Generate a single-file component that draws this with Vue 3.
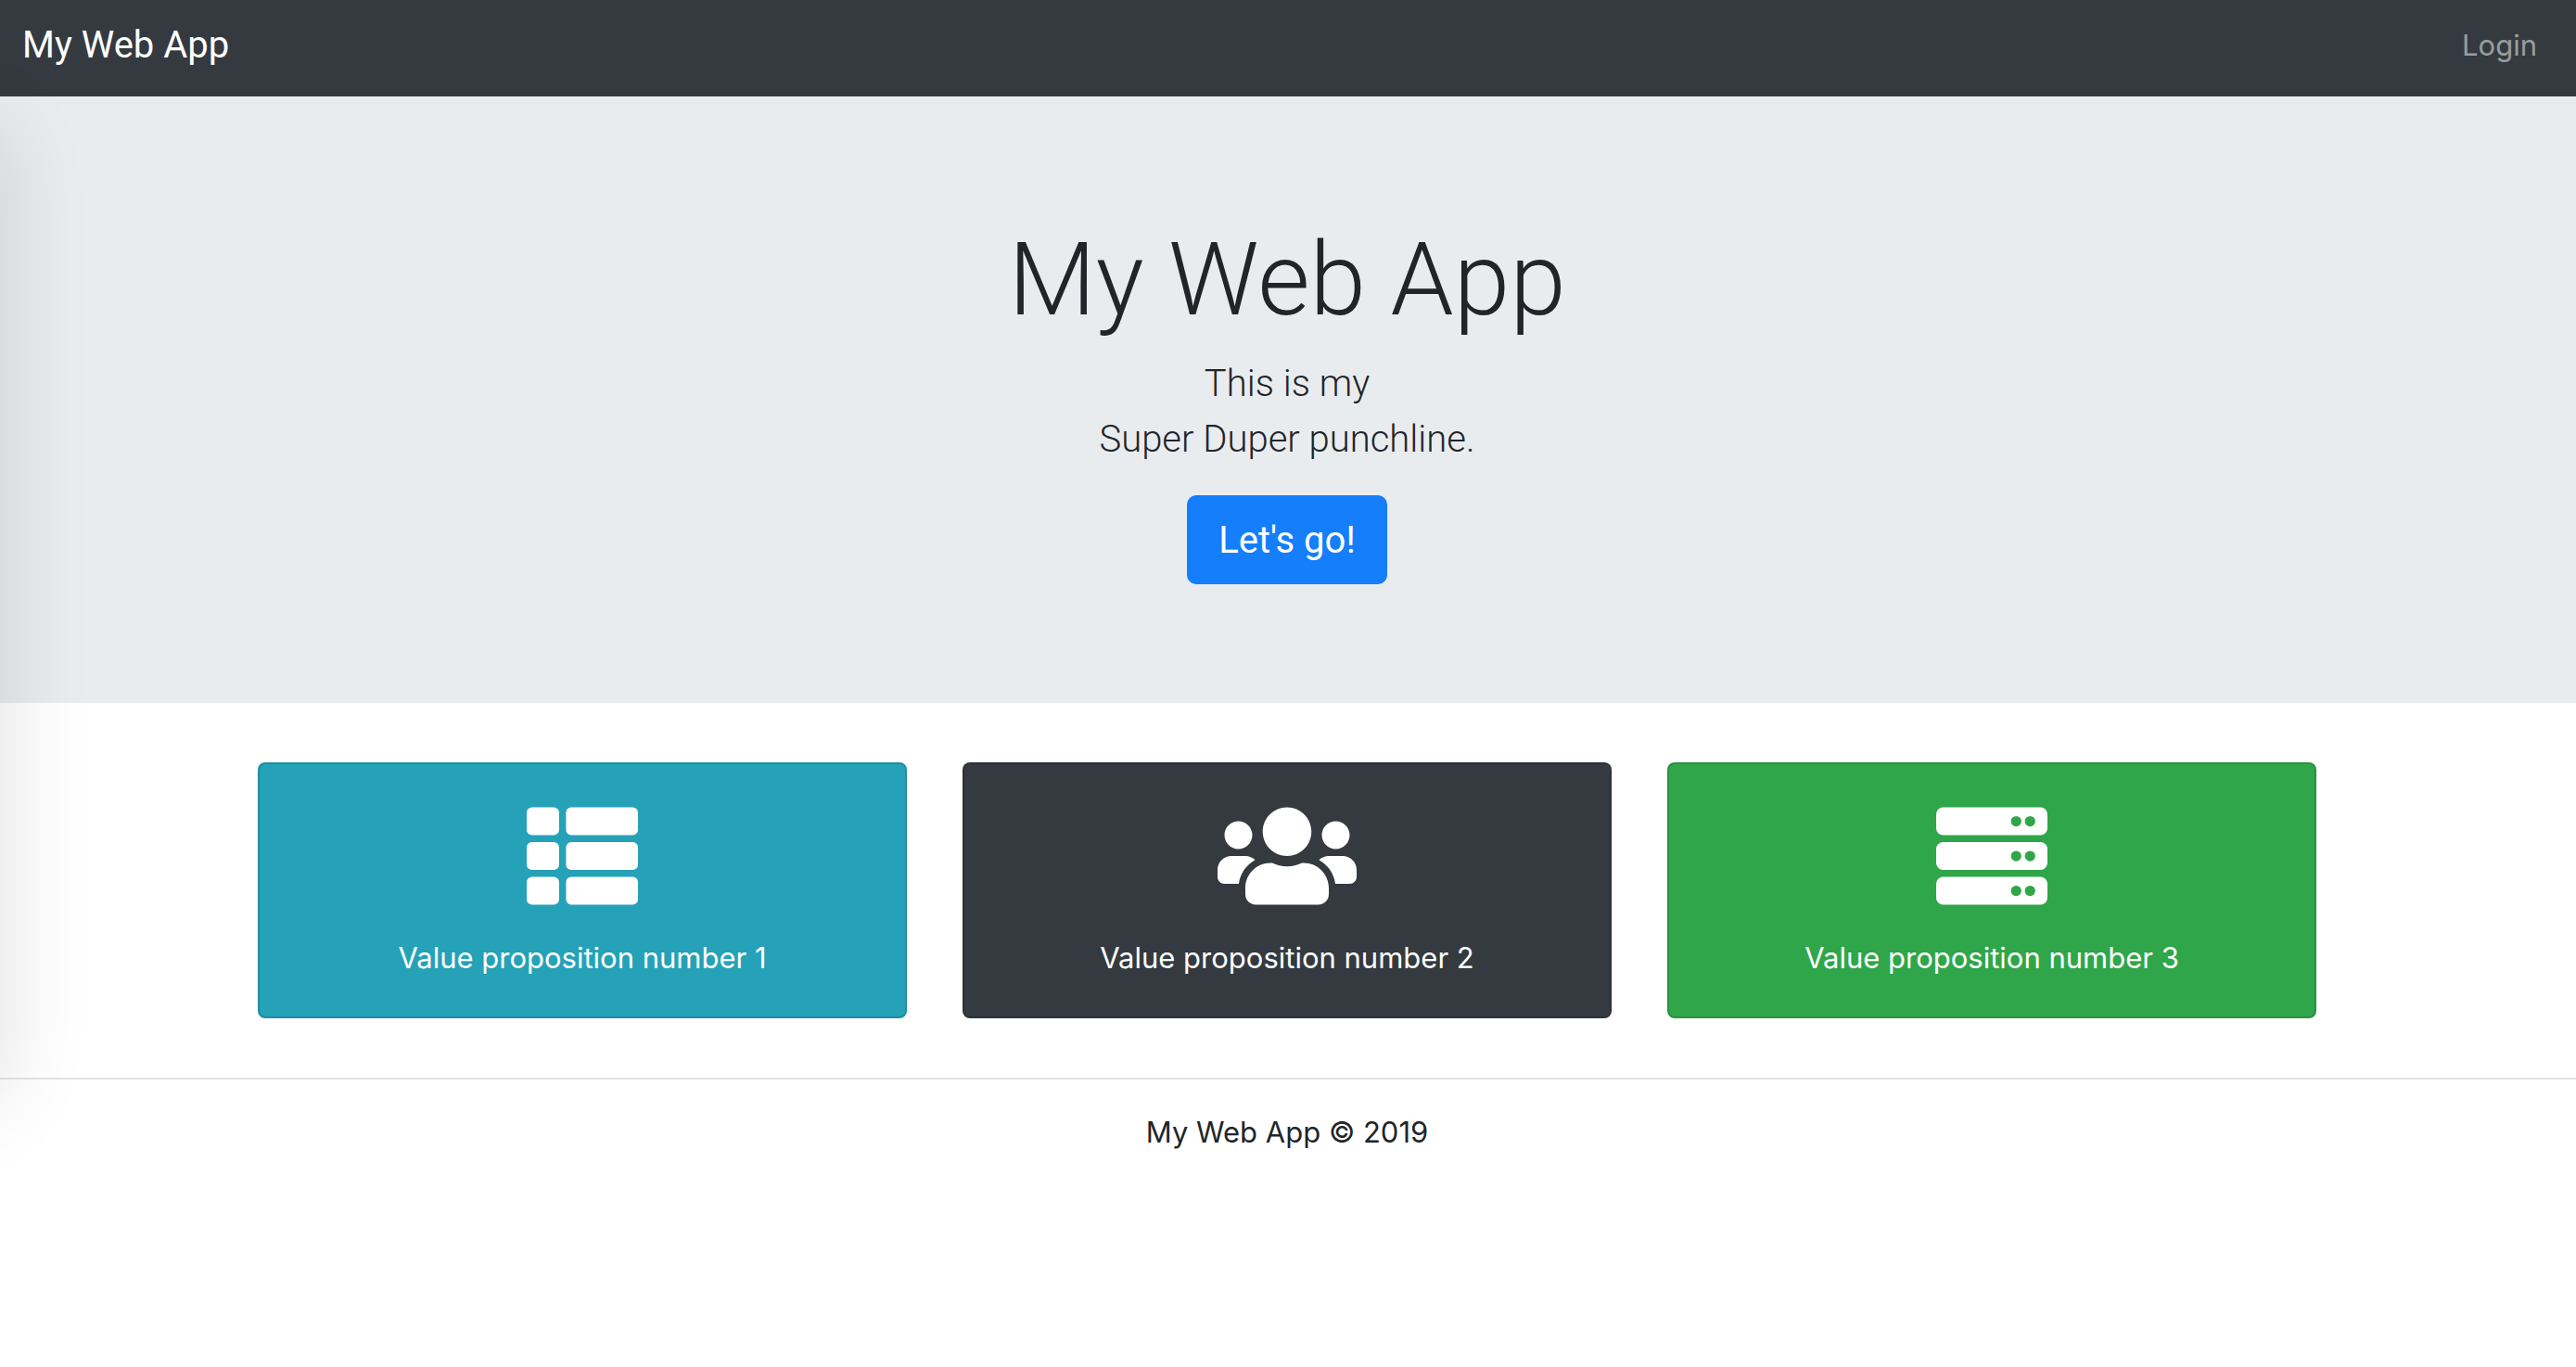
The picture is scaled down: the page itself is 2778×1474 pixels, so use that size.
<script setup>
const propositions = [
  { id: 1, tone: 'info', icon: 'list', text: 'Value proposition number 1' },
  { id: 2, tone: 'dark', icon: 'users', text: 'Value proposition number 2' },
  { id: 3, tone: 'success', icon: 'server', text: 'Value proposition number 3' },
]
const rows = [32, 192, 352]
</script>

<template>
  <div class="page">
    <header class="navbar">
      <a class="brand" href="#">My Web App</a>
      <nav>
        <a class="nav-link" href="#login">Login</a>
      </nav>
    </header>

    <main>
      <section class="hero">
        <h1>My Web App</h1>
        <p class="lead">This is my<br />Super Duper punchline.</p>
        <button class="cta" type="button">Let's go!</button>
      </section>

      <section class="cards">
        <article v-for="p in propositions" :key="p.id" class="card" :class="p.tone">
          <svg v-if="p.icon === 'list'" class="icon" viewBox="0 0 512 512" aria-hidden="true">
            <g v-for="y in rows" :key="y" fill="currentColor">
              <rect x="0" :y="y" width="149" height="128" rx="24" />
              <rect x="181" :y="y" width="331" height="128" rx="24" />
            </g>
          </svg>
          <svg v-else-if="p.icon === 'users'" class="icon wide" viewBox="0 0 640 512" aria-hidden="true">
            <path
              fill="currentColor"
              d="M96 224c35.300 0 64-28.700 64-64s-28.700-64-64-64-64 28.700-64 64 28.700 64 64 64zm448 0c35.300 0 64-28.700 64-64s-28.700-64-64-64-64 28.700-64 64 28.700 64 64 64zm32 32h-64c-17.600 0-33.500 7.100-45.100 18.600 40.300 22.100 68.900 62 75.100 109.400h66c17.700 0 32-14.300 32-32v-32c0-35.300-28.700-64-64-64zm-256 0c61.900 0 112-50.100 112-112S381.900 32 320 32 208 82.100 208 144s50.100 112 112 112zm76.800 32h-8.300c-20.800 10-43.900 16-68.500 16s-47.600-6-68.500-16h-8.300C179.600 288 128 339.600 128 403.200V432c0 26.500 21.500 48 48 48h288c26.500 0 48-21.500 48-48v-28.800c0-63.600-51.600-115.200-115.200-115.200zm-223.700-13.400C161.500 263.100 145.600 256 128 256H64c-35.300 0-64 28.700-64 64v32c0 17.700 14.300 32 32 32h65.900c6.300-47.400 34.900-87.300 75.200-109.400z"
            />
          </svg>
          <svg v-else class="icon" viewBox="0 0 512 512" aria-hidden="true">
            <g v-for="y in rows" :key="y">
              <rect x="0" :y="y" width="512" height="128" rx="32" fill="currentColor" />
              <circle class="led" cx="368" :cy="y + 64" r="24" />
              <circle class="led" cx="432" :cy="y + 64" r="24" />
            </g>
          </svg>
          <p>{{ p.text }}</p>
        </article>
      </section>
    </main>

    <footer class="footer">My Web App © 2019</footer>
    <div class="edge-shadow" aria-hidden="true"></div>
  </div>
</template>

<style>
body {
  margin: 0;
  background: #fff;
}
</style>

<style scoped>
.page {
  position: relative;
  overflow: hidden;
  font-family: Inter, Roboto, sans-serif;
  font-size: 31px;
  line-height: 48px;
  color: #212529;
}
.navbar {
  display: flex;
  align-items: center;
  justify-content: space-between;
  padding: 9px 26px 15px 24px;
  min-height: 80px;
  background: #343a40;
}
.brand {
  font-family: Roboto, sans-serif;
  font-size: 40px;
  line-height: 60px;
  color: #fff;
  text-decoration: none;
}
.nav-link {
  display: block;
  padding: 16px;
  color: rgba(255, 255, 255, 0.5);
  text-decoration: none;
}
.hero {
  padding: 131px 34px 128px 32px;
  background: #e9ecef;
  font-family: Roboto, sans-serif;
  text-align: center;
}
h1 {
  margin: 0 0 15px;
  font-size: 109px;
  font-weight: 300;
  line-height: 134px;
}
.lead {
  margin: 0 0 30px;
  font-size: 40px;
  font-weight: 300;
  line-height: 60px;
}
.cta {
  display: block;
  margin: 0 auto;
  padding: 17px 32px 15px;
  border: 2px solid #147efb;
  border-radius: 10px;
  background: #147efb;
  color: #fff;
  font: inherit;
  font-size: 40px;
  line-height: 60px;
}
.cards {
  display: grid;
  grid-template-columns: repeat(3, 1fr);
  gap: 60px;
  max-width: 2220px;
  margin: 0 auto;
  padding: 64px 32px 64px 30px;
}
.card {
  display: flex;
  flex-direction: column;
  align-items: center;
  gap: 26px;
  padding: 39px 40px;
  border: 2px solid rgba(0, 0, 0, 0.125);
  border-radius: 8px;
  color: #fff;
  text-align: center;
}
.info {
  background: #25a2b8;
}
.dark {
  background: #343a40;
}
.success {
  background: #30a64a;
}
.icon {
  display: block;
  width: 120px;
  height: 120px;
}
.wide {
  width: 150px;
}
.led {
  fill: #30a64a;
}
.card p {
  margin: 0;
}
.footer {
  padding: 33px 34px 31px 32px;
  border-top: 2px solid #e5e5e5;
  text-align: center;
}
.edge-shadow {
  position: absolute;
  top: 140px;
  right: 100%;
  bottom: 92px;
  width: 400px;
  box-shadow: 0 0 90px rgba(0, 0, 0, 0.13);
  pointer-events: none;
}
</style>
